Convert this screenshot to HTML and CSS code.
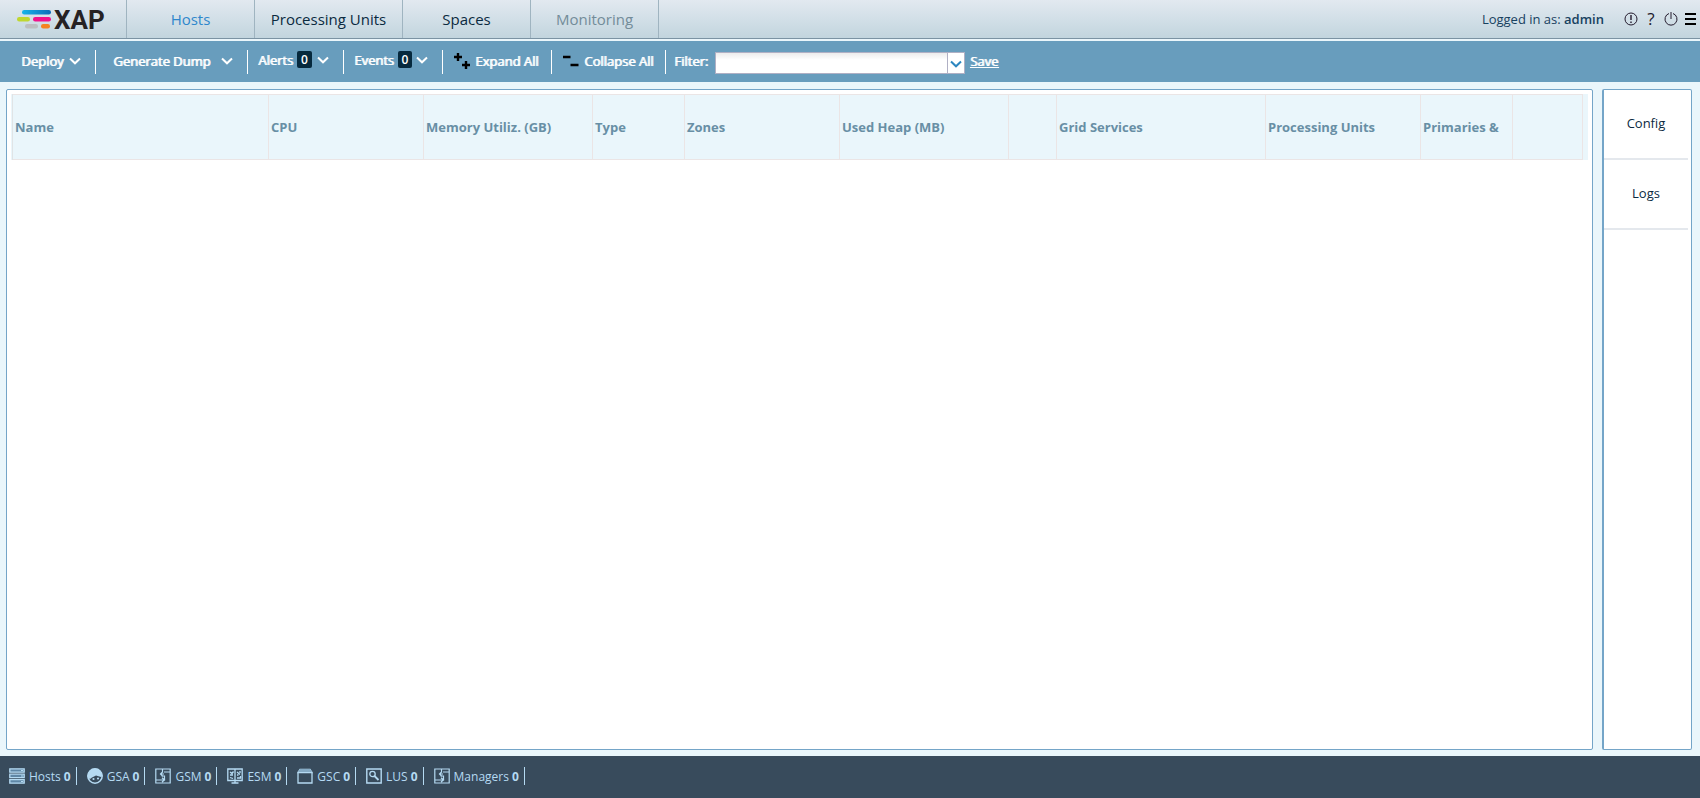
FILE: index.html
```html
<!DOCTYPE html>
<html lang="en">
<head>
<meta charset="utf-8">
<title>XAP</title>
<link rel="stylesheet" href="styles.css">
</head>
<body>
<svg class="defs" aria-hidden="true">
  <symbol id="chevron" viewBox="0 0 12 8"><path d="M1 1.500 6 6.300 11 1.500" fill="none" stroke="currentColor" stroke-width="2"/></symbol>
  <symbol id="manager" viewBox="0 0 16 16"><path d="M.8 1H15.200V15H.8ZM7.500 1V4M9 4H15M8 3.500 5.500 6 8 8.500M5.500 6H9M6.500 8H9.500V12M1 12H9M7 9.800 9.500 12 7 14" fill="none" stroke="currentColor" stroke-width="1.200"/></symbol>
</svg>
<header class="top">
  <div class="logo">
    <svg class="logo-mark" viewBox="0 0 34 20" aria-hidden="true">
      <defs><linearGradient id="blue"><stop offset="0" stop-color="#16b4ea"/><stop offset="1" stop-color="#0d6cb8"/></linearGradient></defs>
      <rect x="5" y="0" width="29" height="4.500" rx="2.200" fill="url(#blue)"/>
      <rect x="0" y="7" width="13" height="4.500" rx="2.200" fill="#bfd730"/>
      <rect x="16" y="7" width="18" height="4.500" rx="2.200" fill="#f0128b"/>
      <rect x="8" y="14" width="13" height="4.500" rx="2.200" fill="#bcbec0"/>
      <rect x="24" y="14" width="9" height="4.500" rx="2.200" fill="#f58220"/>
    </svg>
    <span class="logo-text">XAP</span>
  </div>
  <nav class="tabs">
    <button class="tab active">Hosts</button>
    <button class="tab wide">Processing Units</button>
    <button class="tab">Spaces</button>
    <button class="tab disabled">Monitoring</button>
  </nav>
  <div class="user">
    <span>Logged in as: <span class="name">admin</span></span>
    <div class="tools">
      <button aria-label="About"><svg width="14" height="14" viewBox="0 0 14 14"><circle cx="7" cy="7" r="6" fill="none" stroke="#231a2c"/><path d="M7 3v5M7 9.500V11" stroke="#231a2c" stroke-width="1.400"/></svg></button>
      <button class="help" aria-label="Help">?</button>
      <button aria-label="Log out"><svg width="14" height="14" viewBox="0 0 14 14"><path d="M5 1.500A6 6 0 1 0 9 1.500M7 0V7" fill="none" stroke="#231a2c"/></svg></button>
      <button aria-label="Menu"><svg width="11" height="12" viewBox="0 0 11 12"><path d="M0 1H11M0 6H11M0 11H11" stroke="#000" stroke-width="2"/></svg></button>
    </div>
  </div>
</header>
<div class="toolbar">
  <button class="item deploy">Deploy<svg class="chev"><use href="#chevron"/></svg></button>
  <button class="item dump">Generate Dump<svg class="chev"><use href="#chevron"/></svg></button>
  <button class="item alerts">Alerts<span class="badge">0</span><svg class="chev"><use href="#chevron"/></svg></button>
  <button class="item alerts events">Events<span class="badge">0</span><svg class="chev"><use href="#chevron"/></svg></button>
  <button class="item expand"><svg width="16" height="16" viewBox="0 0 16 16"><path d="M0 4H8M4 0V8M8 12H16M12 8V16" stroke="#000" stroke-width="2.400"/></svg>Expand All</button>
  <button class="item collapse"><svg width="16" height="16" viewBox="0 0 16 16"><path d="M0 4H7.500M7.500 12H15.500" stroke="#000" stroke-width="2.400"/></svg>Collapse All</button>
  <div class="filter">
    <label for="filter">Filter:</label>
    <div class="combo"><input id="filter" type="text"><button aria-label="Saved filters"><svg class="chev"><use href="#chevron"/></svg></button></div>
    <a href="#">Save</a>
  </div>
</div>
<main class="main">
  <section class="panel">
    <div class="grid-head">
      <table>
        <colgroup><col class="w256"><col class="w155"><col class="w169"><col class="w92"><col class="w155"><col class="w169"><col class="w48"><col class="w209"><col class="w155"><col class="w92"><col></colgroup>
        <thead><tr><th>Name</th><th>CPU</th><th>Memory Utiliz. (GB)</th><th>Type</th><th>Zones</th><th>Used Heap (MB)</th><th></th><th>Grid Services</th><th>Processing Units</th><th>Primaries &amp;</th><th></th></tr></thead>
      </table>
    </div>
  </section>
  <aside class="side">
    <button>Config</button>
    <button>Logs</button>
  </aside>
</main>
<footer class="status">
  <div class="stat"><svg viewBox="0 0 16 16"><path d="M.8.8H15.200V4.200H.8ZM.8 6.200H15.200V9.700H.8ZM.8 11.700H15.200V15.200H.8Z" fill="#5f87a6" stroke="currentColor" stroke-width="1.300"/><path d="M12 2.500h2M12 8h2M12 13.500h2" stroke="currentColor"/></svg>Hosts <b>0</b></div>
  <div class="stat"><svg viewBox="0 0 16 16"><circle cx="8" cy="8" r="7.200" fill="none" stroke="currentColor" stroke-width="1.500"/><path d="M.5 8A7.500 7.500 0 0 1 15.500 8L14 9 9 7.500 5 9.500 3 11 1 10Z" fill="currentColor"/><circle cx="6.500" cy="11" r="1.100" fill="currentColor"/><circle cx="11" cy="10.500" r="1.100" fill="currentColor"/></svg>GSA <b>0</b></div>
  <div class="stat"><svg><use href="#manager"/></svg>GSM <b>0</b></div>
  <div class="stat"><svg viewBox="0 0 16 16"><path d="M.8 1H15.200V12.500H.8ZM8 1V15M4.500 15H11.500M3 4l2 1.500L6.500 3.500M3 7H6M3 9.500l3 1M10 4l3 2.500M10 7h1.500M13 3v2M10 10h3.500V8" fill="none" stroke="currentColor" stroke-width="1.300"/></svg>ESM <b>0</b></div>
  <div class="stat"><svg viewBox="0 0 16 16"><path d="M1 4.500H15V15H1ZM3 1.500H13L15 4.500H1Z" fill="none" stroke="currentColor" stroke-width="1.300"/><path d="M3 1H13L15 4H1Z" fill="#86abc5"/></svg>GSC <b>0</b></div>
  <div class="stat"><svg viewBox="0 0 16 16"><path d="M.8 1H15.200V15H.8Z" fill="none" stroke="currentColor" stroke-width="1.400"/><circle cx="6.500" cy="6" r="2.700" fill="none" stroke="currentColor" stroke-width="1.300"/><path d="M8.500 8 12.500 12" stroke="currentColor" stroke-width="1.800"/></svg>LUS <b>0</b></div>
  <div class="stat"><svg><use href="#manager"/></svg>Managers <b>0</b></div>
</footer>
</body>
</html>
```
FILE: styles.css
```css
* { box-sizing: border-box; }
body {
  margin: 0;
  min-height: 100vh;
  display: flex;
  flex-direction: column;
  background: #eaf6fb;
  font-family: "Open Sans", sans-serif;
  font-size: 13px;
  color: #0b2a3f;
}
button {
  margin: 0;
  padding: 0;
  border: 0;
  background: none;
  font: inherit;
  color: inherit;
  text-shadow: inherit;
}
.defs { position: absolute; width: 0; height: 0; }

.top {
  display: flex;
  height: 39px;
  border-bottom: 1px solid #7b93a3;
  background: linear-gradient(#e2e9f0, #c2d5de);
}
.logo {
  display: flex;
  align-items: flex-start;
  gap: 3px;
  width: 127px;
  padding: 10px 0 0 17px;
  border-right: 1px solid #9fb4c0;
}
.logo-mark { width: 34px; height: 20px; }
.logo-text {
  font: bold 26px/20px Roboto, sans-serif;
  color: #262223;
}
.tabs { display: flex; }
.tab {
  min-width: 128px;
  padding: 0 14px;
  border-right: 1px solid #9fb4c0;
  font-size: 15px;
}
.tab.wide { min-width: 148px; }
.tab.active { color: #2f87cc; }
.tab.disabled { color: #738c99; }
.user {
  display: flex;
  align-items: center;
  gap: 20px;
  margin-left: auto;
  padding-right: 4px;
  color: #17415f;
}
.name { font-weight: 600; }
.tools { display: flex; align-items: center; gap: 7px; }
.tools button { display: flex; }
.tools .help {
  width: 12px;
  justify-content: center;
  font-size: 17px;
  line-height: 18px;
  color: #231a2c;
}

.toolbar {
  display: flex;
  align-items: center;
  height: 41px;
  margin-top: 2px;
  background: #689dbd;
  color: #fff;
  text-shadow: 1px 0 0 currentColor;
}
.item {
  display: flex;
  align-items: center;
  height: 24px;
  padding-bottom: 2px;
  border-right: 1px solid #fff;
}
.chev { width: 12px; height: 8px; flex: none; margin-left: auto; }
.deploy { width: 96px; padding-left: 21px; padding-right: 14px; }
.dump { width: 152px; padding-left: 17px; padding-right: 14px; }
.alerts { width: 96px; padding: 0 14px 4px 10px; gap: 4px; }
.events { width: 99px; }
.badge {
  width: 15px;
  height: 17px;
  border-radius: 2px;
  background: #06293d;
  font-size: 12px;
  font-weight: 600;
  line-height: 17px;
  text-shadow: none;
}
.expand, .collapse { gap: 5px; padding-left: 11px; }
.expand { width: 109px; }
.collapse { width: 114px; }
.filter { display: flex; align-items: center; gap: 5px; padding-left: 8px; }
.filter label, .filter a { padding-bottom: 2px; }
.filter label { margin-right: 2px; }
.combo {
  display: flex;
  width: 250px;
  height: 22px;
  margin-top: 2px;
  border: 1px solid #b0b0c4;
  background: #fff;
}
.combo input {
  flex: 1;
  min-width: 0;
  border: 0;
  padding: 0 4px;
  background: linear-gradient(#ececec, #fff 7px);
  font: inherit;
}
.combo button {
  display: flex;
  align-items: center;
  justify-content: center;
  width: 17px;
  padding-top: 3px;
  border-left: 1px solid #b0b0c4;
  color: #2d87c0;
}
.combo .chev { margin: 0; }
.filter a { color: #fff; }

.main {
  flex: 1;
  display: flex;
  gap: 9px;
  padding: 7px 8px 6px 6px;
}
.panel {
  flex: 1;
  padding: 4px;
  border: 1px solid #74a5c8;
  border-radius: 2px;
  background: #fff;
}
.grid-head { padding: 0 5px 0 1px; background: #eaf6fb; }
table {
  width: 100%;
  table-layout: fixed;
  border-collapse: separate;
  border-spacing: 0;
  border-left: 1px solid #e0e4e6;
}
th {
  height: 66px;
  padding: 0 2px;
  overflow: hidden;
  border: solid #ebe5e5;
  border-width: 1px 1px 1px 0;
  text-align: left;
  white-space: nowrap;
  color: #688fa5;
}
.w256 { width: 256px; }
.w155 { width: 155px; }
.w169 { width: 169px; }
.w92 { width: 92px; }
.w48 { width: 48px; }
.w209 { width: 209px; }
.side {
  display: flex;
  flex-direction: column;
  width: 90px;
  padding-right: 3px;
  border: 1px solid #74a5c8;
  border-left-width: 2px;
  border-radius: 2px;
  background: #fff;
}
.side button {
  height: 70px;
  padding-bottom: 2px;
  border-bottom: 2px solid #e4e8ed;
}

.status {
  display: flex;
  align-items: center;
  height: 42px;
  padding: 0 0 2px 9px;
  gap: 10px;
  background: #384b5c;
  color: #b5daf2;
  font-size: 12px;
}
.stat {
  display: flex;
  align-items: center;
  gap: 3px;
  height: 18px;
  padding-right: 5px;
  border-right: 1px solid #b5daf2;
}
.stat svg { width: 16px; height: 16px; margin-right: 1px; }
```
